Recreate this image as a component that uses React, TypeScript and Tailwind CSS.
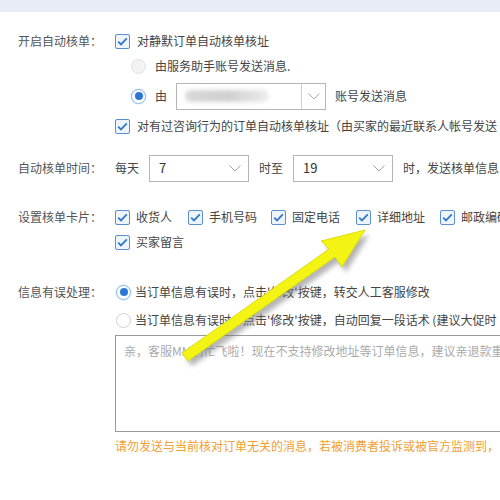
import React from "react";

function Check() {
    return (
        <span className="w-[15px] h-[15px] shrink-0 rounded-[2px] border border-[#5b8fd0] bg-[#eef4fc] flex items-center justify-center">
            <svg width="11" height="9" viewBox="0 0 11 9">
                <path d="M1.2 4.6 L4 7.4 L9.8 1.4" fill="none" stroke="#2f78c8" strokeWidth="1.8" />
            </svg>
        </span>
    );
}

function Radio({ on, disabled }: { on?: boolean; disabled?: boolean }) {
    if (disabled) {
        return <span className="w-[15px] h-[15px] shrink-0 rounded-full border border-[#e2e2e2] bg-[#f3f3f3]" />;
    }
    return (
        <span
            className={
                on
                    ? "w-[15px] h-[15px] shrink-0 rounded-full border border-[#8db8e8] bg-white flex items-center justify-center shadow-[0_0_2px_#bcd6f3]"
                    : "w-[15px] h-[15px] shrink-0 rounded-full border border-[#cfcfcf] bg-white"
            }
        >
            {on && <span className="w-[8px] h-[8px] rounded-full bg-[#2a78d6]" />}
        </span>
    );
}

function Chevron() {
    return (
        <svg width="12" height="7" viewBox="0 0 12 7">
            <path d="M0.5 0.5 L6 6 L11.5 0.5" fill="none" stroke="#a8a8a8" strokeWidth="1" />
        </svg>
    );
}

function Select({ value }: { value: string }) {
    return (
        <div className="w-[100px] h-[27px] border border-[#b5b5b5] bg-white flex items-center justify-between pl-[9px] pr-[7px]">
            <span className="text-[13px] text-[#333]">{value}</span>
            <Chevron />
        </div>
    );
}

function CardItem({ label, w }: { label: string; w: string }) {
    return (
        <div className={`flex items-center gap-[6px] shrink-0 ${w}`}>
            <Check />
            <span>{label}</span>
        </div>
    );
}

export default function App() {
    const arrow = "182,353 329,249 321,241 365,230 342,267 335,257 188,361";
    return (
        <div
            className="relative w-[500px] h-[500px] overflow-hidden bg-white text-[12px] text-[#444] whitespace-nowrap"
            style={{ fontFamily: '"Noto Sans CJK SC", "Noto Sans", sans-serif' }}
        >
            <div className="h-[12px] bg-[#e8edf5]" />

            <div className="pl-[18px] mt-[16px]">
                <div className="flex items-center h-[26px]">
                    <div className="w-[97px] shrink-0 text-[#555]">开启自动核单：</div>
                    <div className="flex items-center gap-[7px]">
                        <Check />
                        <span>对静默订单自动核单核址</span>
                    </div>
                </div>
                <div className="flex items-center h-[24px] pl-[113px] gap-[9px]">
                    <Radio disabled />
                    <span>由服务助手账号发送消息.</span>
                </div>
                <div className="flex items-center h-[36px] pl-[113px]">
                    <Radio on />
                    <span className="ml-[9px]">由</span>
                    <div className="ml-[9px] w-[150px] h-[27px] border border-[#b5b5b5] bg-white flex">
                        <div className="flex-1 flex items-center pl-[8px]">
                            <div className="w-[84px] h-[12px] rounded-full bg-gradient-to-r from-[#d9d9d9] via-[#cfcfcf] to-[#ececec] blur-[2px]" />
                        </div>
                        <div className="w-[24px] border-l border-[#d0d0d0] flex items-center justify-center">
                            <Chevron />
                        </div>
                    </div>
                    <span className="ml-[9px]">账号发送消息</span>
                </div>
                <div className="flex items-center h-[24px] pl-[97px] gap-[7px]">
                    <Check />
                    <span>对有过咨询行为的订单自动核单核址（由买家的最近联系人帐号发送</span>
                </div>

                <div className="flex items-center h-[28px] mt-[16px]">
                    <div className="w-[97px] shrink-0 text-[#555]">自动核单时间：</div>
                    <span>每天</span>
                    <div className="ml-[10px]">
                        <Select value="7" />
                    </div>
                    <span className="ml-[10px]">时至</span>
                    <div className="ml-[10px]">
                        <Select value="19" />
                    </div>
                    <span className="ml-[10px]">时，发送核单信息</span>
                </div>

                <div className="flex items-center h-[24px] mt-[23px]">
                    <div className="w-[97px] shrink-0 text-[#555]">设置核单卡片：</div>
                    <CardItem label="收货人" w="w-[73px]" />
                    <CardItem label="手机号码" w="w-[83px]" />
                    <CardItem label="固定电话" w="w-[85px]" />
                    <CardItem label="详细地址" w="w-[84px]" />
                    <CardItem label="邮政编码" w="w-[84px]" />
                </div>
                <div className="flex items-center h-[26px] pl-[97px]">
                    <CardItem label="买家留言" w="w-[84px]" />
                </div>

                <div className="flex items-center h-[24px] mt-[25px]">
                    <div className="w-[98px] shrink-0 text-[#555]">信息有误处理：</div>
                    <Radio on />
                    <span className="ml-[4px]">当订单信息有误时，点击'修改'按键，转交人工客服修改</span>
                </div>
                <div className="flex items-center h-[24px] mt-[4px] pl-[98px]">
                    <Radio />
                    <span className="ml-[4px]">当订单信息有误时，点击'修改'按键，自动回复一段话术 (建议大促时</span>
                </div>
                <div className="ml-[97px] mt-[3px] h-[97px] w-[420px] border border-[#9a9a9a] px-[8px] pt-[6px] text-[#aaa]">
                    亲，客服MM们忙飞啦！现在不支持修改地址等订单信息，建议亲退款重
                </div>
                <div className="ml-[97px] mt-[4px] h-[20px] flex items-center text-[#f0a030]">
                    请勿发送与当前核对订单无关的消息，若被消费者投诉或被官方监测到，
                </div>
            </div>

            <svg className="absolute left-0 top-0 pointer-events-none" width="500" height="500" viewBox="0 0 500 500">
                <defs>
                    <filter id="sh" x="-20%" y="-20%" width="140%" height="140%">
                        <feGaussianBlur stdDeviation="2.5" />
                    </filter>
                </defs>
                <polygon points={arrow} fill="#777" opacity="0.55" filter="url(#sh)" transform="translate(4,5)" />
                <polygon points={arrow} fill="#f4f414" stroke="#d6d600" strokeWidth="0.8" strokeLinejoin="round" />
            </svg>
        </div>
    );
}
